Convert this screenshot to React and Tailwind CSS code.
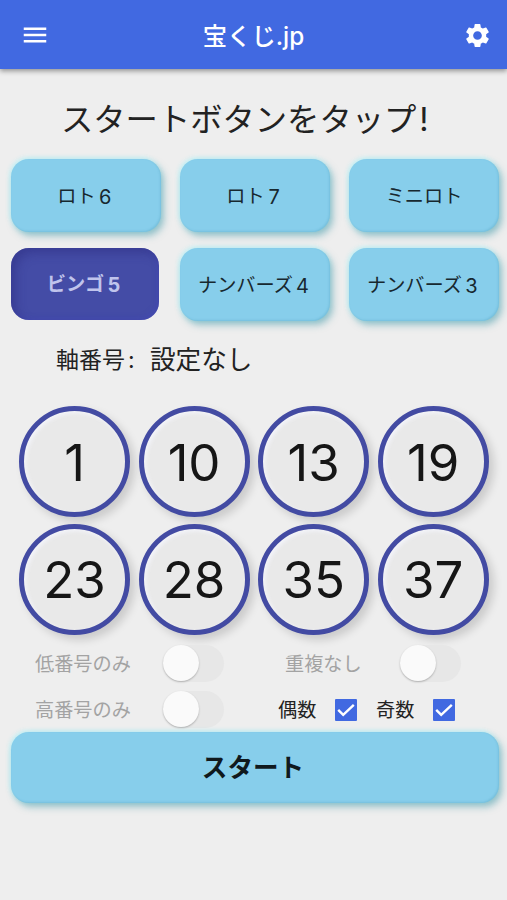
import React from 'react';
import { MdMenu, MdSettings } from 'react-icons/md';

const games = ['ロト6', 'ロト7', 'ミニロト', 'ビンゴ5', 'ナンバーズ4', 'ナンバーズ3'];
const numbers = [1, 10, 13, 19, 23, 28, 35, 37];

const raised =
  'bg-[#87ceeb] shadow-[3px_4px_7px_rgba(60,150,165,0.5),-1px_-1px_5px_rgba(185,243,250,0.95),inset_-1px_-1px_2px_rgba(80,160,190,0.3)]';

// the number at the end takes a full character cell
const GameLabel = ({ label }) => {
  const name = label.replace(/\d$/, '');
  const digit = label.slice(name.length);
  return (
    <span className="flex items-center justify-center pt-0.5">
      {name}
      {digit && <span className="w-[19px] text-center text-[20px]">{digit}</span>}
    </span>
  );
};

const GameButton = ({ label, active }) => {
  if (active) {
    return (
      <button className="h-[72px] w-[148px] rounded-[18px] bg-[#444ca6] text-[19.2px] leading-none font-bold text-[#c0c4ec] shadow-[inset_5px_5px_10px_rgba(45,45,130,0.5),inset_-2px_-2px_5px_rgba(70,75,190,0.5)]">
        <GameLabel label={label} />
      </button>
    );
  }

  return (
    <button className={`h-[73px] w-[150px] rounded-[18px] text-[19.2px] leading-none text-[#17282f] ${raised}`}>
      <GameLabel label={label} />
    </button>
  );
};

const Ball = ({ value }) => (
  <div className="flex h-[111px] w-[111px] items-center justify-center rounded-full border-[5px] border-[#434ba3] bg-[#e9e9e9] pt-px font-['Inter'] text-[51px] leading-none text-[#161616] shadow-[5px_5px_8px_rgba(0,0,0,0.15),inset_2px_2px_4px_rgba(246,248,255,0.8)]">
    {value}
  </div>
);

const Toggle = () => (
  <div className="h-[37px] w-[61px] rounded-full bg-[#e7e7e7]">
    <div className="h-[36px] w-[36px] rounded-full bg-[#fafafa] shadow-[0_1px_2px_rgba(0,0,0,0.25)]" />
  </div>
);

const CheckBox = () => (
  <div className="mt-px flex h-[22px] w-[22px] items-center justify-center rounded-[1px] bg-[#4169e1]">
    <svg width="22" height="22" viewBox="0 0 22 22" fill="none">
      <path d="M3.2 10.8 L8.2 15.8 L18.8 5.8" stroke="white" strokeWidth="2.4" />
    </svg>
  </div>
);

const App = () => {
  return (
    <div className="h-[900px] w-[507px] overflow-hidden bg-[#eeeeee] font-['Inter','Noto_Sans_CJK_JP',sans-serif] text-[#222]">
      <header className="grid h-[69px] grid-cols-[70px_1fr_70px] items-center bg-[#4169e1] pt-px text-white shadow-[0_2px_5px_rgba(0,0,0,0.4)]">
        <MdMenu className="ml-5 h-[30px] w-[30px]" />
        <h1 className="pt-0.5 text-center text-[24.3px] leading-none font-medium">宝くじ.jp</h1>
        <MdSettings className="ml-[26px] h-[29px] w-[29px]" />
      </header>

      <h2 className="flex h-[90px] items-center pt-3 pl-[61px] text-[32.3px] leading-none whitespace-nowrap">
        スタートボタンをタップ<span className="ml-[3px]">!</span>
      </h2>

      <div className="grid grid-cols-3 gap-x-[19px] gap-y-4 pr-2 pl-[11px]">
        {games.map((game) => (
          <GameButton key={game} label={game} active={game === 'ビンゴ5'} />
        ))}
      </div>

      <div className="flex h-[85px] items-center pb-[7px] pl-[56px] leading-none">
        <span className="w-[94px] text-[23px]">
          軸番号<span className="ml-[3px]">:</span>
        </span>
        <span className="text-[25.6px]">設定なし</span>
      </div>

      <div className="grid grid-cols-[repeat(4,111px)] gap-x-[8.6px] gap-y-[6.5px] pl-[19px]">
        {numbers.map((n) => (
          <Ball key={n} value={n} />
        ))}
      </div>

      <div className="mt-[10px] flex h-[37px] items-center text-[19.2px] leading-none text-[#a3a3a3]">
        <span className="ml-[35px] w-[128px] pt-1">低番号のみ</span>
        <Toggle />
        <span className="ml-[61px] w-[115px] pt-1">重複なし</span>
        <Toggle />
      </div>

      <div className="mt-[9px] flex h-[37px] items-center text-[19.2px] leading-none">
        <span className="ml-[35px] w-[128px] pt-1 text-[#a3a3a3]">高番号のみ</span>
        <Toggle />
        <span className="ml-[54px] w-[57px] pt-1">偶数</span>
        <CheckBox />
        <span className="ml-[19px] w-[57px] pt-1">奇数</span>
        <CheckBox />
      </div>

      <button className={`mt-[4px] ml-[11px] h-[71px] w-[488px] rounded-[18px] pt-0.5 pr-1 text-[25.6px] leading-none font-bold text-[#10191d] ${raised}`}>
        スタート
      </button>
    </div>
  );
};

export default App;
